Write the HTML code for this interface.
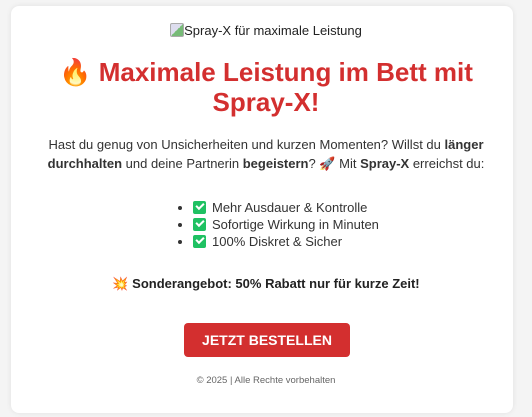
<!DOCTYPE html>
<html><head><meta charset="utf-8"><style>
body{margin:0;background:#f4f4f4;width:532px;height:417px;overflow:hidden;font-family:"Liberation Sans",Arial,sans-serif;color:#333;}
.card{position:absolute;left:11px;top:6px;width:502px;height:407px;background:#fff;border-radius:8px;box-shadow:0 0 6px rgba(0,0,0,.08);}
.c{position:absolute;left:0;width:532px;text-align:center;}
.chk{display:inline-block;width:13px;height:13px;background:#1fc162;border-radius:2px;vertical-align:-2px;margin-right:6px;position:relative}
.chk:after{content:"";position:absolute;left:3px;top:2px;width:6px;height:3px;border-left:2px solid #fff;border-bottom:2px solid #fff;transform:rotate(-45deg)}
li{margin:0;line-height:17px}
</style></head><body>
<div class="card"></div>
<div class="c" style="top:23px;font-size:13px;color:#222"><span style="display:inline-block;width:12px;height:12px;border:1px solid #aaa;border-radius:2px;vertical-align:-2px;background:linear-gradient(135deg,#dde 50%,#7b7 50%)"></span>Spray-X für maximale Leistung</div>
<div class="c" style="top:57px;font-size:26px;font-weight:bold;color:#d32f2f;line-height:30px">🔥 Maximale Leistung im Bett mit<br>Spray-X!</div>
<div class="c" style="top:135px;font-size:13px;line-height:19px;color:#333">Hast du genug von Unsicherheiten und kurzen Momenten? Willst du <b>länger</b><br><b>durchhalten</b> und deine Partnerin <b>begeistern</b>? 🚀 Mit <b>Spray-X</b> erreichst du:</div>
<ul style="position:absolute;left:174px;top:199px;margin:0;padding-left:19px;font-size:13px;color:#333">
<li><span class="chk"></span>Mehr Ausdauer &amp; Kontrolle</li>
<li><span class="chk"></span>Sofortige Wirkung in Minuten</li>
<li><span class="chk"></span>100% Diskret &amp; Sicher</li>
</ul>
<div class="c" style="top:276px;font-size:13px;font-weight:bold;color:#222">💥 Sonderangebot: 50% Rabatt nur für kurze Zeit!</div>
<div style="position:absolute;left:184px;top:323px;width:166px;height:34px;background:#d32f2f;border-radius:4px;color:#fff;font-weight:bold;font-size:14px;line-height:34px;text-align:center">JETZT BESTELLEN</div>
<div class="c" style="top:375px;font-size:9.5px;color:#666">© 2025 | Alle Rechte vorbehalten</div>
</body></html>
